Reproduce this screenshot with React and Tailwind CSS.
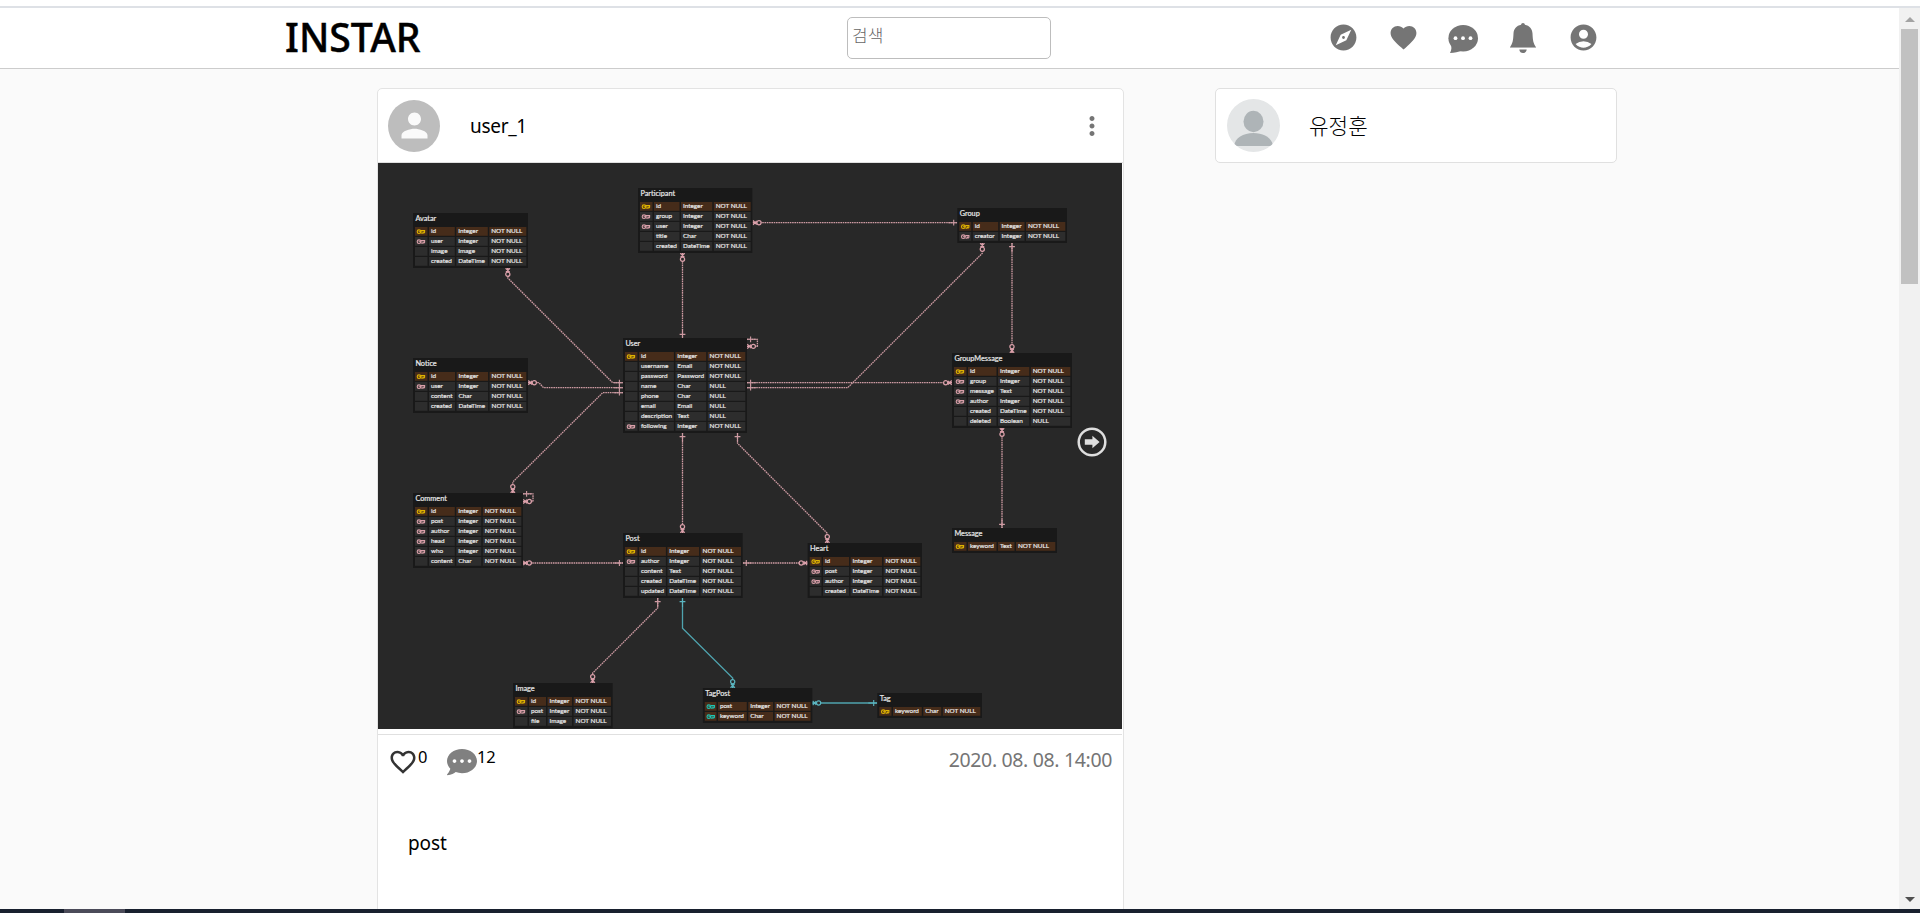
import React from "react";
import { MdExplore, MdFavorite, MdFavoriteBorder, MdAccountCircle, MdPerson, MdMoreVert } from "react-icons/md";
import { FaCommentDots } from "react-icons/fa";

const PINK = "#cd9aa2";
const TEAL = "#4fa3ae";
const KEY_COLORS = { y: "#e0b400", p: "#dba0aa", t: "#1fc4b4" };

// Row format: key, name, type, null constraint
const N = "NOT NULL";
const TABLES = [
  { name: "Avatar", x: 413, y: 213, cols: [429, 456.3, 489.3], r: 528, rows: [["y", "id", "Integer", N], ["p", "user", "Integer", N], ["", "image", "Image", N], ["", "created", "DateTime", N]] },
  { name: "Participant", x: 638, y: 188, cols: [654, 681, 713.8], r: 752.4, rows: [["y", "id", "Integer", N], ["p", "group", "Integer", N], ["p", "user", "Integer", N], ["", "title", "Char", N], ["", "created", "DateTime", N]] },
  { name: "Group", x: 957.3, y: 208, cols: [972.8, 999.7, 1026], r: 1067, rows: [["y", "id", "Integer", N], ["p", "creator", "Integer", N]] },
  { name: "Notice", x: 413, y: 358, cols: [429, 456.6, 489.6], r: 528, rows: [["y", "id", "Integer", N], ["p", "user", "Integer", N], ["", "content", "Char", N], ["", "created", "DateTime", N]] },
  { name: "User", x: 623, y: 338, cols: [639, 675.4, 707.7], r: 747, rows: [["y", "id", "Integer", N], ["", "username", "Email", N], ["", "password", "Password", N], ["", "name", "Char", "NULL"], ["", "phone", "Char", "NULL"], ["", "email", "Email", "NULL"], ["", "description", "Text", "NULL"], ["p", "following", "Integer", N]] },
  { name: "GroupMessage", x: 952, y: 353, cols: [968, 998, 1030.8], r: 1072, rows: [["y", "id", "Integer", N], ["p", "group", "Integer", N], ["p", "message", "Text", N], ["p", "author", "Integer", N], ["", "created", "DateTime", N], ["", "deleted", "Boolean", "NULL"]] },
  { name: "Comment", x: 413, y: 493, cols: [429, 456.3, 482.8], r: 523, rows: [["y", "id", "Integer", N], ["p", "post", "Integer", N], ["p", "author", "Integer", N], ["p", "head", "Integer", N], ["p", "who", "Integer", N], ["", "content", "Char", N]] },
  { name: "Post", x: 623, y: 533, cols: [639, 667.4, 700.6], r: 742.7, rows: [["y", "id", "Integer", N], ["p", "author", "Integer", N], ["", "content", "Text", N], ["", "created", "DateTime", N], ["", "updated", "DateTime", N]] },
  { name: "Heart", x: 807.7, y: 543, cols: [823, 850.6, 883.6], r: 922, rows: [["y", "id", "Integer", N], ["p", "post", "Integer", N], ["p", "author", "Integer", N], ["", "created", "DateTime", N]] },
  { name: "Message", x: 952, y: 528, cols: [968, 998, 1016], r: 1057, rows: [["y", "keyword", "Text", N]] },
  { name: "Image", x: 513, y: 683, cols: [529, 547.5, 573.6], r: 612.7, rows: [["y", "id", "Integer", N], ["p", "post", "Integer", N], ["", "file", "Image", N]] },
  { name: "TagPost", x: 702.8, y: 688, cols: [718, 748.3, 774.6], r: 812.3, rows: [["t", "post", "Integer", N], ["t", "keyword", "Char", N]] },
  { name: "Tag", x: 877.3, y: 693, cols: [893, 923.3, 942.8], r: 982, rows: [["y", "keyword", "Char", N]] },
];

const LINKS = [
  "753,222.7 957,222.7",
  "682.5,253 682.5,338",
  "507.8,268 507.8,278 612.7,382.7 623,382.7",
  "528,382.7 539,382.7 543.5,387.7 623,387.7",
  "623,392.7 602.7,392.7 512.8,482 512.8,493",
  "747,339.3 757.4,339.3 757.4,346.4 747,346.4",
  "747,382.7 952,382.7",
  "747,387.7 847.7,387.7 982.3,253.3 982.3,243",
  "1012,243 1012,353",
  "1002,428 1002,528",
  "682.5,433 682.5,533",
  "737.5,433 737.5,443.3 827.3,533.3 827.3,543",
  "523,563 623,563",
  "523,493.8 533,493.8 533,501.5 523,501.5",
  "743,563 808,563",
  "657.7,598 657.7,608 592.7,673 592.7,683",
];

// Cardinality markers: x, y, rotation (0 = table lies to the left)
const MANY = [
  [752.7, 222.7, 0], [682.5, 253, 90], [507.8, 268, 90], [528, 382.7, 0], [512.8, 493, 270],
  [747, 346.4, 0], [952, 382.7, 180], [982.3, 243, 90], [1012, 353, 270], [1002, 428, 90],
  [682.5, 533, 270], [827.3, 543, 270], [523, 563, 0], [523, 501.5, 0], [807.5, 563, 180], [592.7, 683, 270],
];
const ONE = [
  [957.3, 222.7, 180], [682.5, 338, 270], [623, 382.7, 180], [623, 387.7, 180], [623, 392.7, 180],
  [747, 339.3, 0], [747, 382.7, 0], [747, 387.7, 0], [1012, 243, 90], [1002, 528, 270],
  [682.5, 433, 90], [737.5, 433, 90], [623, 563, 180], [523, 493.8, 0], [742.7, 563, 0], [657.7, 598, 90],
];

function Many({ at, color }) {
  return (
    <g transform={`translate(${at[0]} ${at[1]}) rotate(${at[2]})`} stroke={color} strokeWidth="1.25" fill="none">
      <path d="M0.3 -2.2L4 1.8M0.3 2.2L4 -1.8M0 0H4" />
      <circle cx="6.3" cy="0" r="2.1" fill="#282828" />
    </g>
  );
}

function One({ at, color }) {
  return (
    <g transform={`translate(${at[0]} ${at[1]}) rotate(${at[2]})`} stroke={color} strokeWidth="1.1" fill="none">
      <path d="M0 0H9M3.6 -2.9V2.9" />
    </g>
  );
}

function Table({ t }) {
  const h = 15 + t.rows.length * 10;
  const edges = [t.x + 2, ...t.cols, t.r - 0.2];
  return (
    <g>
      <rect x={t.x} y={t.y} width={t.r - t.x} height={h} fill="#191919" />
      <text x={t.x + 2.4} y={t.y + 7.5} fontSize="7.3" fill="#e8e8e8" stroke="#e8e8e8" strokeWidth="0.2">{t.name}</text>
      {t.rows.map((row, i) => {
        const y = t.y + 14 + i * 10;
        const primary = row[0] === "y" || row[0] === "t";
        return (
          <g key={i}>
            {edges.slice(0, 4).map((x, c) => (
              <rect key={c} x={x} y={y} width={edges[c + 1] - x - 1.5} height="8.8" fill={primary ? "#462c1a" : "#2d2d2d"} />
            ))}
            {row[0] && (
              <g stroke={KEY_COLORS[row[0]]} strokeWidth="1.1" fill="none">
                <circle cx={t.x + 6} cy={y + 4.7} r="1.8" />
                <path d={`M${t.x + 5.6} ${y + 4.7}h2.8M${t.x + 8} ${y + 3.6}h3.6v1.6q-.6 1.6-1.5.2q-.8 1.6-1.7.2`} />
              </g>
            )}
            {row.slice(1).map((s, c) => (
              <text key={c} x={t.cols[c] + 1.9} y={y + 5.6} fontSize="6.4" fill="#e6e6e6" stroke="#e6e6e6" strokeWidth="0.2">{s}</text>
            ))}
          </g>
        );
      })}
    </g>
  );
}

function Diagram() {
  return (
    <svg className="block h-[566px] w-[744px] bg-[#282828]" viewBox="378 163 744 566" fontFamily="Lato, sans-serif">
      {LINKS.map((p) => (
        <polyline key={p} points={p} fill="none" stroke={PINK} strokeWidth="1.3" strokeDasharray="1.6 0.7" />
      ))}
      <g fill="none" stroke={TEAL} strokeWidth="1.3">
        <polyline points="682.5,598 682.5,628.3 732.7,678 732.7,688" />
        <polyline points="812,703 877,703" />
      </g>
      {MANY.map((m, i) => <Many key={i} at={m} color="#dba0aa" />)}
      {ONE.map((m, i) => <One key={i} at={m} color="#cd9aa2" />)}
      <Many at={[732.7, 688, 270]} color="#5bb5c0" />
      <Many at={[812.3, 703, 0]} color="#5bb5c0" />
      <One at={[682.5, 598, 90]} color="#5bb5c0" />
      <One at={[877.3, 703, 180]} color="#5bb5c0" />
      {TABLES.map((t) => <Table key={t.name} t={t} />)}
    </svg>
  );
}

function BellIcon() {
  return (
    <svg className="h-[30px] w-[26px]" viewBox="0 0 26 30" fill="#757575">
      <path d="M13 0c1.1 0 1.800.700 1.900 1.800C19.500 2.700 22.300 6 22.500 10.500c.3 7.500.9 9.700 3.500 13.700H0c2.600-4 3.200-6.200 3.500-13.700C3.700 6 6.500 2.700 11.100 1.800 11.200.7 11.900 0 13 0z" />
      <path d="M0 24.200h26v.800H0z" opacity=".5" />
      <path d="M9.300 26.400h7.400c-.2 2.200-1.800 3.600-3.700 3.600s-3.500-1.400-3.700-3.600z" />
    </svg>
  );
}

function ChatIcon() {
  return (
    <svg className="h-[28px] w-[30px]" viewBox="0 0 30 28">
      <ellipse cx="15.200" cy="13.200" rx="14.800" ry="13.200" fill="#757575" />
      <path d="M2.500 18c1.500 4 1.100 7-.500 10 4.500-.200 8.500-1 12-2.500z" fill="#757575" />
      <g fill="#fff">
        <circle cx="7.500" cy="13.200" r="1.900" />
        <circle cx="15" cy="13.200" r="1.900" />
        <circle cx="22.500" cy="13.200" r="1.900" />
      </g>
    </svg>
  );
}

function Header() {
  return (
    <header className="flex h-[61px] items-center border-b border-[#cccccc] bg-white">
      <h1 className="ml-[285px] w-[562px] pb-[3px] text-[39px] leading-none font-medium text-black">
        <span className="inline-block origin-left scale-x-[1.005] [-webkit-text-stroke:0.4px_black]">INSTAR</span>
      </h1>
      <input
        className="mb-px h-[42px] w-[204px] rounded-[5px] border border-[#bdbdbd] px-[4px] pb-[5px] text-[17px] font-light text-[#333] outline-none placeholder:text-[#666]"
        placeholder="검색"
      />
      <nav className="ml-[262px] flex items-center pb-px text-[#757575]">
        <a className="flex w-[60px] justify-center"><MdExplore size={31} /></a>
        <a className="flex w-[60px] justify-center"><MdFavorite size={31} /></a>
        <a className="flex w-[60px] justify-center pt-0.5"><ChatIcon /></a>
        <a className="flex w-[60px] justify-center"><BellIcon /></a>
        <a className="flex w-[60px] justify-center"><MdAccountCircle size={31} /></a>
      </nav>
    </header>
  );
}

function Post() {
  return (
    <article className="ml-[377px] h-[840px] w-[747px] shrink-0 rounded-[5px] border border-[#e3e3e3] bg-white">
      <div className="flex h-[74px] items-center border-b border-[#e0e0e0] pl-[10px]">
        <div className="flex size-[52px] items-center justify-center rounded-full bg-[#bdbdbd] text-[#fafafa]">
          <MdPerson size={39} />
        </div>
        <span className="ml-[30px] pt-px text-[19px] tracking-[-0.300px]">user_1</span>
        <MdMoreVert className="mr-[16px] ml-auto text-[#757575]" size={30} />
      </div>
      <div className="relative">
        <Diagram />
        <svg className="absolute top-[264px] left-[699px] size-[30px]" viewBox="0 0 30 30">
          <circle cx="15" cy="15" r="13.300" fill="none" stroke="#dedede" strokeWidth="2.500" />
          <path d="M7.800 12.300h7.600V8.700l7.200 6.300-7.200 6.300v-3.600H7.800z" fill="#dedede" />
        </svg>
      </div>
      <div className="mt-[5px] flex w-[744px] items-start border-t border-[#e0e0e0] pt-[11px] pl-[10px]">
        <MdFavoriteBorder size={30} className="mt-px text-[#333]" />
        <span className="w-[29px] text-[16.500px] leading-[22px]">0</span>
        <FaCommentDots size={30} className="mt-px text-[#808080]" />
        <span className="text-[16.500px] leading-[22px] tracking-[-0.300px]">12</span>
        <time className="mr-[10px] ml-auto text-[19.500px] leading-[28px] tracking-[-0.350px] text-[#757575]">2020. 08. 08. 14:00</time>
      </div>
      <p className="mt-[52px] ml-[30px] text-[19px] leading-[28px] tracking-[-0.100px]">post</p>
    </article>
  );
}

function SideCard() {
  return (
    <aside className="ml-[91px] flex h-[75px] w-[402px] items-center rounded-[5px] border border-[#e0e0e0] bg-white pl-[11px]">
      <svg className="size-[53px]" viewBox="0 0 53 53">
        <defs>
          <clipPath id="face"><circle cx="26.500" cy="26.500" r="26.500" /></clipPath>
        </defs>
        <g clipPath="url(#face)">
          <rect width="53" height="53" fill="#e4e6e7" />
          <ellipse cx="26.500" cy="22.500" rx="10" ry="10.700" fill="#aeb4b7" />
          <path d="M7 47c1-8 9-13 19.500-13S45 39 46 47z" fill="#aeb4b7" />
        </g>
      </svg>
      <span className="ml-[29px] text-[21.300px] leading-none font-light">유정훈</span>
    </aside>
  );
}

function Scrollbar() {
  return (
    <div className="flex w-[21px] shrink-0 flex-col items-center bg-[#f1f1f1]">
      <svg className="h-[21px] w-[10px] shrink-0" viewBox="0 0 10 21"><path d="M0 14L5 9l5 5z" fill="#a3a3a3" /></svg>
      <div className="h-[255px] w-[17px] bg-[#c1c1c1]" />
      <svg className="mt-auto h-[14px] w-[10px] shrink-0" viewBox="0 0 10 14"><path d="M0 2h10L5 7z" fill="#505050" /></svg>
    </div>
  );
}

export default function App() {
  return (
    <div className="flex h-[913px] w-[1920px] flex-col overflow-hidden bg-[#fafafa] font-['Noto_Sans','Noto_Sans_CJK_KR',sans-serif] text-black">
      <div className="h-2 shrink-0 border-b-2 border-[#dee1e6] bg-white" />
      <div className="flex h-[901px] shrink-0">
        <div className="w-[1899px] overflow-hidden">
          <Header />
          <main className="mt-[19px] flex items-start">
            <Post />
            <SideCard />
          </main>
        </div>
        <Scrollbar />
      </div>
      <div className="flex h-1 shrink-0 bg-[#18202e]">
        <div className="ml-16 w-[61px] bg-[#4b4b59]" />
      </div>
    </div>
  );
}
